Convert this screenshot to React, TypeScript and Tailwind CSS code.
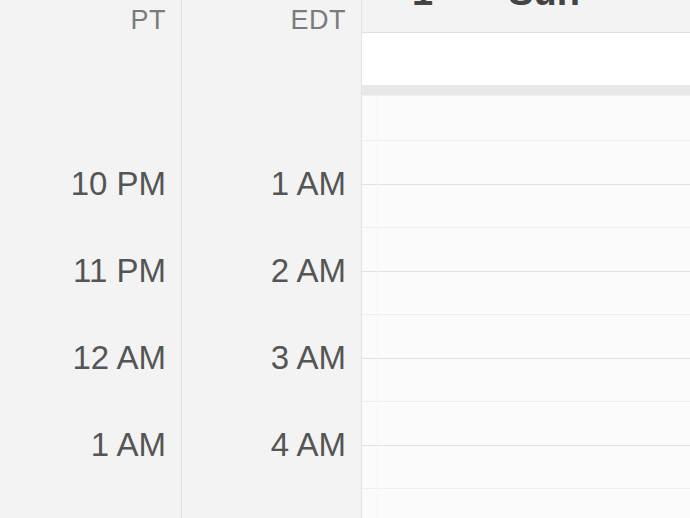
import React from "react";

const font = { fontFamily: '"Liberation Sans", Arial, sans-serif' };

function TimeColumn({ tz, labels, width }: { tz: string; labels: string[]; width: string }) {
  return (
    <div className={`${width} shrink-0 h-full border-r border-[#e1e1e1] bg-[#f3f3f3] flex flex-col items-end pr-[15px] overflow-hidden`}>
      <div className="h-[140px] shrink-0 w-full flex justify-end">
        <span className="text-[27px] leading-none text-[#7b7b7b] pt-[7px] tracking-[0.5px]">{tz}</span>
      </div>
      {labels.map((l) => (
        <div key={l} className="h-[87px] shrink-0 flex items-center">
          <span className="text-[33px] leading-none text-[#555555]">{l}</span>
        </div>
      ))}
    </div>
  );
}

function HourBlock() {
  return (
    <>
      <div className="h-[43px] shrink-0 border-b border-[#efefef]" />
      <div className="h-[44px] shrink-0 border-b border-[#e2e2e2]" />
    </>
  );
}

export default function App() {
  return (
    <div className="w-[690px] h-[518px] overflow-hidden flex bg-[#f3f3f3]" style={font}>
      <TimeColumn tz="PT" width="w-[182px]" labels={["10 PM", "11 PM", "12 AM", "1 AM", "2 AM"]} />
      <TimeColumn tz="EDT" width="w-[180px]" labels={["1 AM", "2 AM", "3 AM", "4 AM", "5 AM"]} />
      <div className="flex-1 h-full flex flex-col overflow-hidden">
        <div className="h-[33px] shrink-0 border-b border-[#e0e0e0] bg-[#f3f3f3] overflow-hidden flex">
          <span className="ml-[50px] -mt-[27px] text-[38px] leading-none font-bold text-[#444444]">1</span>
          <span className="ml-[75px] -mt-[27px] text-[38px] leading-none font-bold text-[#444444]">Sun</span>
        </div>
        <div className="h-[52px] shrink-0 bg-white" />
        <div className="h-[11px] shrink-0 bg-[#e8e8e8] border-b border-[#f0f0f0]" />
        <div className="flex-1 bg-[#fbfbfb] flex">
          <div className="w-[16px] shrink-0 border-r border-[#f4f4f4] flex flex-col">
            <div className="h-[45px] shrink-0 border-b border-[#efefef]" />
            <div className="h-[44px] shrink-0 border-b border-[#e2e2e2]" />
            <HourBlock />
            <HourBlock />
            <HourBlock />
            <HourBlock />
          </div>
          <div className="flex-1 flex flex-col">
            <div className="h-[45px] shrink-0 border-b border-[#efefef]" />
            <div className="h-[44px] shrink-0 border-b border-[#e2e2e2]" />
            <HourBlock />
            <HourBlock />
            <HourBlock />
            <HourBlock />
          </div>
        </div>
      </div>
    </div>
  );
}
